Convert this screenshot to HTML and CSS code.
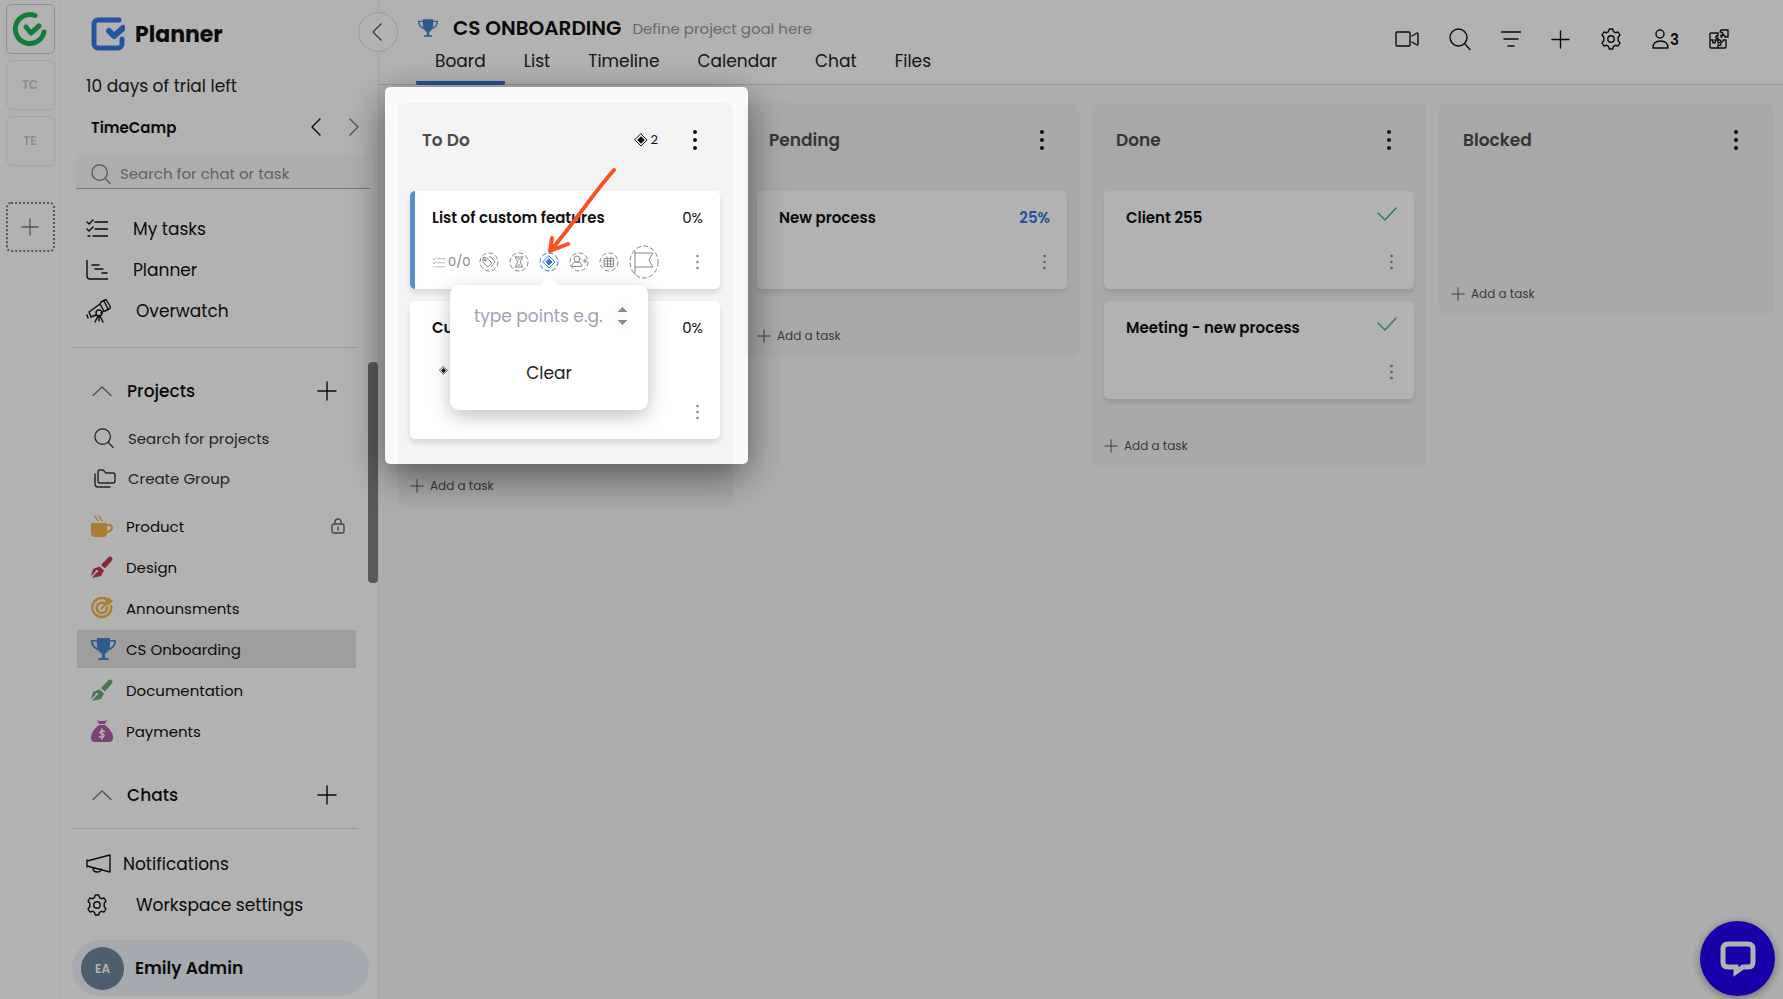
FILE: index.html
```html
<!DOCTYPE html>
<html lang="en">
<head>
    <meta charset="UTF-8">
    <meta name="viewport" content="width=device-width, initial-scale=1.0">
    <link rel="stylesheet" href="styles.css">
    <title>Planner</title>
</head>
<body>
    <!-- shared icons -->
    <svg class="sprite" width="0" height="0" aria-hidden="true">
        <symbol id="search" viewBox="0 0 22 22"><circle cx="9.500" cy="9.500" r="8.500"/><path d="M15.500 15.500L21 21.500"/></symbol>
        <symbol id="plus" viewBox="0 0 20 20"><path d="M10 1v18M1 10h18"/></symbol>
        <symbol id="up" viewBox="0 0 20 10"><path d="M1 9.500L10 1l9 8.500"/></symbol>
        <symbol id="left" viewBox="0 0 10 18"><path d="M9 1L1 9l8 8"/></symbol>
        <symbol id="right" viewBox="0 0 10 18"><path d="M1 1l8 8-8 8"/></symbol>
        <symbol id="gear" viewBox="0 0 22 22"><path d="M8.500 3.600L9.300 1h3.400l.8 2.600 1.900 1.100 2.700-.7 1.900 3-1.800 2.200v3.600l1.800 2.200-1.900 3-2.700-.7-1.900 1.100-.8 2.600H9.300l-.8-2.600-1.900-1.100-2.700.7-1.900-3 1.800-2.200V9.200L2 7l1.900-3 2.700.7z"/><circle cx="11" cy="11" r="3.200"/></symbol>
        <symbol id="checklist" viewBox="0 0 22 19"><path d="M9 3h13M9 10h13M7 17h15M1 3l2 2 4-4M1 10l2 2 4-4M2 17h2"/></symbol>
        <symbol id="trophy" viewBox="0 0 25 22"><path fill="currentColor" stroke="none" fill-rule="evenodd" d="M6 0h13v2h6c0 6-3 9-7.500 10.500C16.500 14.500 14.500 15.500 14 16v4h3.500v2h-10v-2H11v-4c-.5-.5-2.500-1.500-3.500-3.500C3 11 0 8 0 2h6zM1.800 3.600c.3 3.200 1.800 5.300 4.700 6.700C5.900 8 5.900 6 5.900 3.600zM23.200 3.600h-4.100c0 2.400 0 4.400-.6 6.700 2.900-1.400 4.400-3.500 4.700-6.700z"/></symbol>
        <symbol id="pen" viewBox="0 0 22 22"><path fill="currentColor" stroke="none" d="M10 9L17.500 1.200c2-2 5.200 1 3.500 3.200L14 12.500zM8.500 10.500l4.500 4-3 5.500L1 22l4.500-5.500a1.300 1.300 0 1 0-1-1L0 20.500l2-7.500z"/></symbol>
        <symbol id="diamond" viewBox="0 0 14 14"><path stroke-width="1" d="M7 1l6 6-6 6-6-6z"/><path fill="currentColor" stroke="none" d="M7 3.200L10.800 7 7 10.800 3.200 7z"/></symbol>
        <symbol id="dots" viewBox="0 0 6 22"><g fill="currentColor" stroke="none"><circle cx="3" cy="3" r="2"/><circle cx="3" cy="11" r="2"/><circle cx="3" cy="19" r="2"/></g></symbol>
        <symbol id="dots-small" viewBox="0 0 5 16"><g fill="currentColor" stroke="none"><circle cx="2.500" cy="2" r="1.300"/><circle cx="2.500" cy="8" r="1.300"/><circle cx="2.500" cy="14" r="1.300"/></g></symbol>
        <symbol id="done" viewBox="0 0 20 14"><path d="M1 6l7 7L19 1"/></symbol>
    </svg>

    <div class="app">
        <aside class="rail">
            <a class="rail-item logo" href="#" aria-label="TimeCamp">
                <svg width="36" height="36" viewBox="0 0 36 36"><path d="M23 4.500A14.500 14.500 0 1 0 32 21" stroke-width="5"/><path d="M14 16l5 6 8-7" stroke-width="5"/></svg>
            </a>
            <a class="rail-item" href="#">TC</a>
            <a class="rail-item" href="#">TE</a>
            <button class="rail-item rail-add" aria-label="Add workspace"><svg width="18" height="18"><use href="#plus"/></svg></button>
        </aside>

        <aside class="sidebar">
            <div class="brand">
                <svg width="34" height="34" viewBox="0 0 34 34"><path d="M28 3H7a4 4 0 0 0-4 4v20a4 4 0 0 0 4 4h20a4 4 0 0 0 4-4v-5"/><path d="M18 14l5 5 9-8" stroke-width="6"/></svg>
                <h1>Planner</h1>
            </div>
            <p class="trial">10 days of trial left</p>
            <div class="workspace">
                <strong>TimeCamp</strong>
                <button aria-label="Previous"><svg width="10" height="18"><use href="#left"/></svg></button>
                <button class="muted" aria-label="Next"><svg width="10" height="18"><use href="#right"/></svg></button>
            </div>
            <div class="search">
                <svg width="20" height="20"><use href="#search"/></svg>
                <input type="text" aria-label="Search for chat or task" placeholder="Search for chat or task">
            </div>
            <nav class="menu">
                <a href="#"><svg width="22" height="19"><use href="#checklist"/></svg>My tasks</a>
                <a href="#"><svg width="22" height="20" viewBox="0 0 22 20"><path d="M1 0v16q0 3 3 3h18M6 5h7M9 9h8M16 13h5"/></svg>Planner</a>
                <a href="#"><svg width="25" height="24" viewBox="0 0 25 24"><path d="M14 5l4 7-3 2M10 16l-5 2-2-5 11-8M14 5l1-2 4-2q1-1 2 1l3 5q1 2-1 3l-4 2h-1M18 2l4 8M1 16l1 3M9 23l3-6M17 23l-3-6M13 17v5"/><circle cx="13" cy="14" r="3"/></svg>Overwatch</a>
            </nav>
            <hr>

            <div class="projects">
                <div class="section-head">
                    <svg class="muted" width="20" height="10"><use href="#up"/></svg>
                    <h2>Projects</h2>
                    <button aria-label="Add project"><svg width="20" height="20"><use href="#plus"/></svg></button>
                </div>
                <div class="tools">
                    <a href="#"><svg width="20" height="20"><use href="#search"/></svg>Search for projects</a>
                    <a href="#"><svg width="22" height="19" viewBox="0 0 22 19"><path d="M4 3q0-2 2-2h3l3 3h7q2 0 2 2v6q0 2-2 2H6q-2 0-2-2zM1 5v10q0 3 3 3h12"/></svg>Create Group</a>
                </div>
                <ul class="project-list">
                    <li><a href="#">
                        <svg class="gold" width="22" height="22" viewBox="0 0 22 22"><path d="M4 1l3 5M8 1l3 5"/><path fill="currentColor" stroke="none" d="M0 8h16v10q0 4-4 4H4q-4 0-4-4z"/><path d="M16 10h2q3 0 3 3t-5 4" stroke-width="2"/></svg>
                        Product
                        <svg class="lock" width="14" height="16" viewBox="0 0 14 16"><rect x="1" y="6" width="12" height="9" rx="2"/><path d="M4 6V4q0-3 3-3t3 3v2M7 9v3"/></svg>
                    </a></li>
                    <li><a href="#"><svg class="red" width="22" height="22"><use href="#pen"/></svg>Design</a></li>
                    <li><a href="#">
                        <svg class="gold" width="22" height="22" viewBox="0 0 22 22"><path d="M16 2.500A9.500 9.500 0 1 0 20.200 9M14 6.700A5.200 5.200 0 1 0 16 10" stroke-width="2.500"/><path d="M10.500 11.500L18 4" stroke-width="2"/><path fill="currentColor" d="M15 4l3-3 1 2 2 1-3 3h-3z"/></svg>
                        Announsments
                    </a></li>
                    <li><a class="selected" href="#"><svg class="blue" width="25" height="22"><use href="#trophy"/></svg>CS Onboarding</a></li>
                    <li><a href="#"><svg class="green" width="22" height="22"><use href="#pen"/></svg>Documentation</a></li>
                    <li><a href="#">
                        <svg class="purple" width="22" height="22" viewBox="0 0 22 22"><path fill="currentColor" stroke="none" d="M6 0l2.500 1h5L16 0l-2 4H8zM8 5h6c4 3 8 8 8 12 0 3-1 5-4 5H4c-3 0-4-2-4-5C0 13 4 8 8 5z"/><path class="coin" d="M13.500 11.500q-2.500-1.500-4 0t1.500 2.200 1.500 2.800-4.200 0M11 9v10"/></svg>
                        Payments
                    </a></li>
                </ul>
                <div class="section-head chats">
                    <svg class="muted" width="20" height="10"><use href="#up"/></svg>
                    <h2>Chats</h2>
                    <button aria-label="Add chat"><svg width="20" height="20"><use href="#plus"/></svg></button>
                </div>
            </div>

            <div class="sidebar-foot">
                <hr>
                <nav class="menu">
                    <a class="close" href="#"><svg width="25" height="20" viewBox="0 0 25 20"><path d="M1 6v7M1 7l23-6v17L1 12M7 14q0 4 4 4t4-3"/></svg>Notifications</a>
                    <a class="wide" href="#"><svg width="22" height="22"><use href="#gear"/></svg>Workspace settings</a>
                </nav>
                <a class="profile" href="#"><span class="avatar">EA</span>Emily Admin</a>
            </div>
            <div class="scroll-thumb"></div>
            <button class="collapse" aria-label="Collapse sidebar"><svg width="10" height="18"><use href="#left"/></svg></button>
        </aside>

        <main class="main">
            <header class="topbar">
                <div>
                    <div class="project-title">
                        <svg class="blue" width="20" height="18"><use href="#trophy"/></svg>
                        <h2>CS ONBOARDING</h2>
                        <span>Define project goal here</span>
                    </div>
                    <nav class="tabs">
                        <a class="active" href="#">Board</a>
                        <a href="#">List</a>
                        <a href="#">Timeline</a>
                        <a href="#">Calendar</a>
                        <a href="#">Chat</a>
                        <a href="#">Files</a>
                    </nav>
                </div>
                <div class="actions">
                    <button aria-label="Video call"><svg width="24" height="16" viewBox="0 0 24 16"><rect x="1" y="1" width="14" height="14" rx="1"/><path d="M17 5l5-3q1 0 1 1v10q0 1-1 1l-5-3"/></svg></button>
                    <button aria-label="Search"><svg width="22" height="22"><use href="#search"/></svg></button>
                    <button aria-label="Filter"><svg width="20" height="16" viewBox="0 0 20 16"><path d="M0 1h20M3 8h14M7 15h6"/></svg></button>
                    <button aria-label="Add"><svg width="19" height="19"><use href="#plus"/></svg></button>
                    <button aria-label="Settings"><svg width="22" height="22"><use href="#gear"/></svg></button>
                    <button aria-label="Members"><svg width="17" height="20" viewBox="0 0 17 20"><circle cx="8" cy="5" r="4"/><path d="M1 19q0-7 7.500-7t7.500 7z"/></svg>3</button>
                    <button aria-label="Integrations"><svg width="20" height="20" viewBox="0 0 20 20"><path d="M9 11V9q-2 1-2-1t2-1V4H2q-1 0-1 1v13q0 1 1 1h14q1 0 1-1v-7h-3q0 2-1 2t-2-2H9v3q3-1 3 1t-3 1v3M1 11h3q-1 3 1 3t1-3h3M11 3l1-2h7v7h-3q0-2-2-2t-1 2h-1V6q2 1 2-1t-3-2z"/></svg></button>
                </div>
            </header>

            <div class="board">
                <section class="column">
                    <div class="column-head">
                        <h3>To Do</h3>
                        <span class="points"><svg width="14" height="14"><use href="#diamond"/></svg>2</span>
                        <button aria-label="Column menu"><svg width="6" height="22"><use href="#dots"/></svg></button>
                    </div>
                    <div class="cards">
                        <article class="card accent">
                            <div class="card-top"><h4>List of custom features</h4><span>0%</span></div>
                            <div class="card-bottom">
                                <span class="checks"><svg width="13" height="11"><use href="#checklist"/></svg>0/0</span>
                                <button class="chip" aria-label="Tags"><svg width="20" height="20" viewBox="0 0 20 20"><circle class="ring" cx="10" cy="10" r="9"/><path d="M4 6v4l5 5 4-4-5-5zM10 5h2l4 5-4 5"/><circle cx="6" cy="8" r="1"/></svg></button>
                                <button class="chip" aria-label="Estimate"><svg width="20" height="20" viewBox="0 0 20 20"><circle class="ring" cx="10" cy="10" r="9"/><path d="M6 5h8M6 15h8M7 5v2l2 3-2 3v2M13 5v2l-2 3 2 3v2M9 13h2M9 7h2"/></svg></button>
                                <div class="chip-wrap">
                                    <button class="chip on" aria-label="Points"><svg width="20" height="20" viewBox="0 0 20 20"><circle class="ring" cx="10" cy="10" r="9"/><path d="M10 4l6 6-6 6-6-6z"/><path fill="currentColor" d="M10 7l3 3-3 3-3-3z"/></svg></button>
                                    <div class="popover">
                                        <input type="number" aria-label="Points" placeholder="type points e.g.">
                                        <button>Clear</button>
                                    </div>
                                </div>
                                <button class="chip" aria-label="Assign"><svg width="20" height="20" viewBox="0 0 20 20"><circle class="ring" cx="10" cy="10" r="9"/><circle cx="8" cy="7" r="3"/><path d="M3 14q0-4 5-4t5 4zM14 9h4M16 7v4"/></svg></button>
                                <button class="chip" aria-label="Due date"><svg width="20" height="20" viewBox="0 0 20 20"><circle class="ring" cx="10" cy="10" r="9"/><path d="M5.500 6.500h9v8h-9zM5.500 9h9M5.500 12h9M8.500 7v8M11.500 7v8M8 5v1M12 5v1"/></svg></button>
                                <button class="chip" aria-label="Priority"><svg width="30" height="34" viewBox="0 0 30 34"><ellipse class="ring" cx="15" cy="17" rx="14" ry="16"/><path d="M6 6v23M6 8h18l-4 7 4 7H6"/></svg></button>
                                <button class="more" aria-label="Task menu"><svg width="5" height="16"><use href="#dots-small"/></svg></button>
                            </div>
                        </article>
                        <article class="card tall">
                            <div class="card-top"><h4>Custom</h4><span>0%</span></div>
                            <div class="card-points"><svg width="9" height="9"><use href="#diamond"/></svg></div>
                            <div class="card-bottom">
                                <button class="more" aria-label="Task menu"><svg width="5" height="16"><use href="#dots-small"/></svg></button>
                            </div>
                        </article>
                    </div>
                    <button class="add-task"><svg width="14" height="14"><use href="#plus"/></svg>Add a task</button>
                </section>

                <section class="column">
                    <div class="column-head">
                        <h3>Pending</h3>
                        <button aria-label="Column menu"><svg width="6" height="22"><use href="#dots"/></svg></button>
                    </div>
                    <div class="cards">
                        <article class="card">
                            <div class="card-top"><h4>New process</h4><span class="progress">25%</span></div>
                            <div class="card-bottom">
                                <button class="more" aria-label="Task menu"><svg width="5" height="16"><use href="#dots-small"/></svg></button>
                            </div>
                        </article>
                    </div>
                    <button class="add-task"><svg width="14" height="14"><use href="#plus"/></svg>Add a task</button>
                </section>

                <section class="column">
                    <div class="column-head">
                        <h3>Done</h3>
                        <button aria-label="Column menu"><svg width="6" height="22"><use href="#dots"/></svg></button>
                    </div>
                    <div class="cards">
                        <article class="card">
                            <div class="card-top"><h4>Client 255</h4><svg class="check" width="20" height="14"><use href="#done"/></svg></div>
                            <div class="card-bottom">
                                <button class="more" aria-label="Task menu"><svg width="5" height="16"><use href="#dots-small"/></svg></button>
                            </div>
                        </article>
                        <article class="card">
                            <div class="card-top"><h4>Meeting - new process</h4><svg class="check" width="20" height="14"><use href="#done"/></svg></div>
                            <div class="card-bottom">
                                <button class="more" aria-label="Task menu"><svg width="5" height="16"><use href="#dots-small"/></svg></button>
                            </div>
                        </article>
                    </div>
                    <button class="add-task"><svg width="14" height="14"><use href="#plus"/></svg>Add a task</button>
                </section>

                <section class="column">
                    <div class="column-head">
                        <h3>Blocked</h3>
                        <button aria-label="Column menu"><svg width="6" height="22"><use href="#dots"/></svg></button>
                    </div>
                    <div class="cards"></div>
                    <button class="add-task"><svg width="14" height="14"><use href="#plus"/></svg>Add a task</button>
                </section>
            </div>
        </main>
    </div>

    <button class="live-chat" aria-label="Open chat">
        <svg width="36" height="36" viewBox="0 0 36 36"><path d="M8 3h20q5 0 5 5v13q0 5-5 5h-5l-7 5v-5H8q-5 0-5-5V8q0-5 5-5z"/></svg>
    </button>

    <!-- dims everything outside the highlighted column -->
    <div class="spotlight">
        <svg width="363" height="377" viewBox="0 0 363 377"><path d="M229 83C210 104 190 135 166 163M167 151l-2 13 18-7"/></svg>
    </div>
</body>
</html>
```

FILE: styles.css
```css
* {
    box-sizing: border-box;
}

body {
    font-family: Poppins, Inter, 'Open Sans', sans-serif;
    font-size: 17px;
    color: #111;
    background-color: #fafafa;
    margin: 0;
    overflow: hidden;
}

h1, h2, h3, h4, p, ul {
    margin: 0;
    padding: 0;
}

ul {
    list-style-type: none;
}

a {
    color: inherit;
    text-decoration: none;
}

button, input {
    font: inherit;
    color: inherit;
    background: none;
    border: 0;
    padding: 0;
}

button {
    cursor: pointer;
}

svg {
    display: block;
    flex-shrink: 0;
    fill: none;
    stroke: currentColor;
    stroke-width: 1.4;
    stroke-linecap: round;
    stroke-linejoin: round;
}

hr {
    width: 286px;
    height: 1px;
    margin: 0 0 0 11px;
    border: 0;
    background-color: #dcdcdc;
}

.sprite {
    position: absolute;
}

.muted {
    color: #777;
}

.gold { color: #f5b44a; }
.red { color: #c43c50; }
.blue { color: #4682c8; }
.green { color: #68a878; }
.purple { color: #b060a8; }

.app {
    display: flex;
    height: 100vh;
}

/* workspace rail */
.rail {
    width: 61px;
    flex-shrink: 0;
    display: flex;
    flex-direction: column;
    align-items: center;
    gap: 6px;
    padding-top: 4px;
    background-color: #fff;
    border-right: 1px solid #f0f0f0;
}

.rail-item {
    width: 49px;
    height: 50px;
    display: flex;
    align-items: center;
    justify-content: center;
    border: 1px solid #ececec;
    border-radius: 5px;
    font-size: 12px;
    font-weight: 600;
    color: #ccc;
}

.rail-item.logo {
    border: 1px solid #d0d0d0;
    color: #1fb455;
}

.rail-add {
    margin-top: 30px;
    border: 2px dotted #777;
    color: #777;
}

/* sidebar */
.sidebar {
    position: relative;
    width: 318px;
    flex-shrink: 0;
    display: flex;
    flex-direction: column;
    background-color: #fff;
    border-right: 1px solid #eee;
}

.brand {
    display: flex;
    align-items: center;
    gap: 10px;
    height: 68px;
    padding-left: 30px;
}

.brand svg {
    color: #3579e6;
    stroke-width: 5;
}

.brand h1 {
    font-size: 22px;
    font-weight: 700;
}

.trial {
    padding-left: 25px;
    line-height: 36px;
    color: #222;
}

.workspace {
    display: flex;
    align-items: center;
    gap: 28px;
    height: 46px;
    padding: 0 19px 0 30px;
    font-size: 15px;
}

.workspace strong {
    flex: 1;
    font-weight: 600;
}

.search {
    display: flex;
    align-items: center;
    gap: 9px;
    height: 34px;
    margin: 5px 8px 19px 15px;
    padding: 4px 0 0 15px;
    background-color: #fafafa;
    border-bottom: 1px solid #aaa;
    color: #777;
}

.search input {
    width: 220px;
    font-size: 15px;
}

.search input::placeholder {
    color: #8a8a8a;
}

.menu a {
    display: flex;
    align-items: center;
    gap: 25px;
    height: 41px;
    padding-left: 25px;
}

.menu a.close {
    gap: 12px;
}

.menu a.wide {
    gap: 28px;
}

.menu + hr {
    margin-top: 16px;
}

.projects {
    flex: 1;
    min-height: 0;
    padding-top: 21px;
    overflow: hidden;
}

.section-head {
    display: flex;
    align-items: center;
    gap: 15px;
    height: 44px;
    padding: 0 41px 0 31px;
}

.section-head h2 {
    flex: 1;
    font-size: 17px;
    font-weight: 500;
}

.section-head.chats {
    margin-top: 23px;
}

.tools {
    padding: 5px 0 9px 33px;
    font-size: 15px;
    color: #333;
}

.tools a {
    display: grid;
    grid-template-columns: 34px 1fr;
    align-items: center;
    height: 40px;
}

.project-list {
    display: flex;
    flex-direction: column;
    gap: 3px;
    margin: 0 22px 0 16px;
    font-size: 15px;
}

.project-list a {
    display: grid;
    grid-template-columns: 35px 1fr auto;
    align-items: center;
    height: 38px;
    padding: 0 11px 0 14px;
}

.project-list a.selected {
    background-color: #e2e2e2;
}

.project-list .lock {
    color: #666;
}

.project-list .coin {
    stroke: #fff;
}

.sidebar-foot .menu {
    padding-top: 14px;
}

.profile {
    display: flex;
    align-items: center;
    gap: 11px;
    height: 56px;
    margin: 15px 9px 3px 11px;
    padding-left: 9px;
    border-radius: 28px;
    background-color: #eef4fd;
    font-weight: 600;
}

.avatar {
    width: 43px;
    height: 43px;
    border-radius: 50%;
    background-color: #6f879d;
    color: #fff;
    font-size: 12px;
    line-height: 43px;
    text-align: center;
}

.scroll-thumb {
    position: absolute;
    top: 362px;
    right: 0;
    width: 10px;
    height: 221px;
    border-radius: 4px;
    background-color: #808080;
}

.collapse {
    position: absolute;
    top: 12px;
    right: -20px;
    width: 40px;
    height: 40px;
    display: flex;
    align-items: center;
    justify-content: center;
    padding-right: 3px;
    border: 1px solid #ddd;
    border-radius: 50%;
    background-color: #fff;
    color: #555;
}

/* top bar */
.main {
    flex: 1;
    min-width: 0;
}

.topbar {
    display: flex;
    justify-content: space-between;
    height: 85px;
    padding: 12px 54px 0 37px;
    background-color: #fff;
    border-bottom: 1px solid #ddd;
}

.project-title {
    display: flex;
    align-items: center;
    height: 32px;
    padding-left: 2px;
}

.project-title h2 {
    margin: 0 11px 0 15px;
    font-size: 20px;
    font-weight: 600;
}

.project-title span {
    font-size: 15px;
    color: #999;
}

.tabs {
    display: flex;
    height: 41px;
}

.tabs a {
    padding: 0 19px;
    line-height: 34px;
    border-bottom: 4px solid transparent;
    color: #222;
}

.tabs a.active {
    border-radius: 2px;
    border-bottom-color: #3474d8;
}

.actions {
    display: flex;
    align-items: center;
    gap: 30px;
    height: 54px;
}

.actions button {
    display: flex;
    align-items: center;
    gap: 1px;
    font-size: 15px;
    font-weight: 600;
}

/* board */
.board {
    display: flex;
    align-items: flex-start;
    gap: 12px;
    padding: 18px 9px 18px 19px;
}

.column {
    flex: 1;
    min-width: 0;
    padding: 0 13px 0 12px;
    border-radius: 8px;
    background-color: #f3f3f3;
}

.column-head {
    display: flex;
    align-items: center;
    height: 88px;
    padding: 0 22px 14px 12px;
}

.column-head h3 {
    flex: 1;
    font-size: 17px;
    font-weight: 600;
    color: #4d4d4d;
}

.points {
    display: flex;
    align-items: center;
    gap: 3px;
    margin-right: 34px;
    font-size: 13px;
}

.cards {
    display: flex;
    flex-direction: column;
    gap: 12px;
    min-height: 56px;
}

.card {
    display: flex;
    flex-direction: column;
    justify-content: space-between;
    height: 98px;
    padding: 14px 17px 10px 22px;
    border-radius: 5px;
    background-color: #fff;
    box-shadow: 0 4px 5px rgba(0, 0, 0, 0.1);
    font-size: 15px;
}

.card.accent {
    padding-left: 17px;
    border-left: 5px solid #5b8fc9;
}

.card.tall {
    height: 138px;
}

.card-top {
    display: flex;
    justify-content: space-between;
    line-height: 26px;
}

.card-top h4 {
    font-size: 15px;
    font-weight: 600;
}

.progress {
    color: #3474d8;
    font-weight: 600;
}

.check {
    margin-top: 2px;
    color: #46b070;
}

.card-bottom {
    display: flex;
    align-items: center;
    height: 34px;
    padding-right: 3px;
    color: #888;
}

.card-points {
    padding: 4px 0 0 7px;
}

.checks {
    display: flex;
    align-items: center;
    gap: 3px;
    width: 47px;
    font-size: 13px;
}

.card-bottom .chip {
    display: block;
    margin-right: 10px;
}

.card-bottom .chip.on {
    color: #2f78e0;
}

.card-bottom svg {
    stroke-width: 1;
}

.ring {
    stroke-dasharray: 4 3;
}

.more {
    margin-left: auto;
}

.chip-wrap {
    position: relative;
}

.popover {
    position: absolute;
    z-index: 2;
    top: 33px;
    left: -89px;
    width: 198px;
    height: 125px;
    padding: 15px 18px 0;
    border-radius: 9px;
    background-color: #fff;
    box-shadow: 0 6px 20px rgba(0, 0, 0, 0.25);
    text-align: center;
    color: #222;
    font-size: 17px;
}

.popover::before {
    content: '';
    position: absolute;
    top: -9px;
    left: 89px;
    border: 10px solid transparent;
    border-top: 0;
    border-bottom-color: #fff;
}

.popover input {
    width: 100%;
    height: 32px;
    margin-bottom: 28px;
    padding-left: 6px;
}

.popover input::placeholder {
    color: #9ca3b4;
}

.popover input::-webkit-inner-spin-button {
    width: 18px;
    height: 26px;
    background-color: #efefef;
    opacity: 1;
}

.add-task {
    display: flex;
    align-items: center;
    gap: 6px;
    height: 43px;
    margin-top: 25px;
    font-size: 12px;
    color: #555;
}

/* chat widget */
.live-chat {
    position: fixed;
    right: 8px;
    bottom: 3px;
    width: 75px;
    height: 75px;
    display: flex;
    align-items: center;
    justify-content: center;
    border-radius: 50%;
    background-color: #2000f0;
    box-shadow: 0 2px 10px rgba(0, 0, 0, 0.4);
    color: #fff;
}

.live-chat svg {
    stroke-width: 5;
    stroke-linejoin: miter;
}

.spotlight {
    position: fixed;
    z-index: 5;
    top: 87px;
    left: 385px;
    width: 363px;
    height: 377px;
    border-radius: 5px;
    box-shadow: 0 12px 40px rgba(0, 0, 0, 0.5), 0 0 0 100vmax rgba(0, 0, 0, 0.3);
    pointer-events: none;
}

.spotlight svg {
    color: #fb5020;
    stroke-width: 4;
}
```
